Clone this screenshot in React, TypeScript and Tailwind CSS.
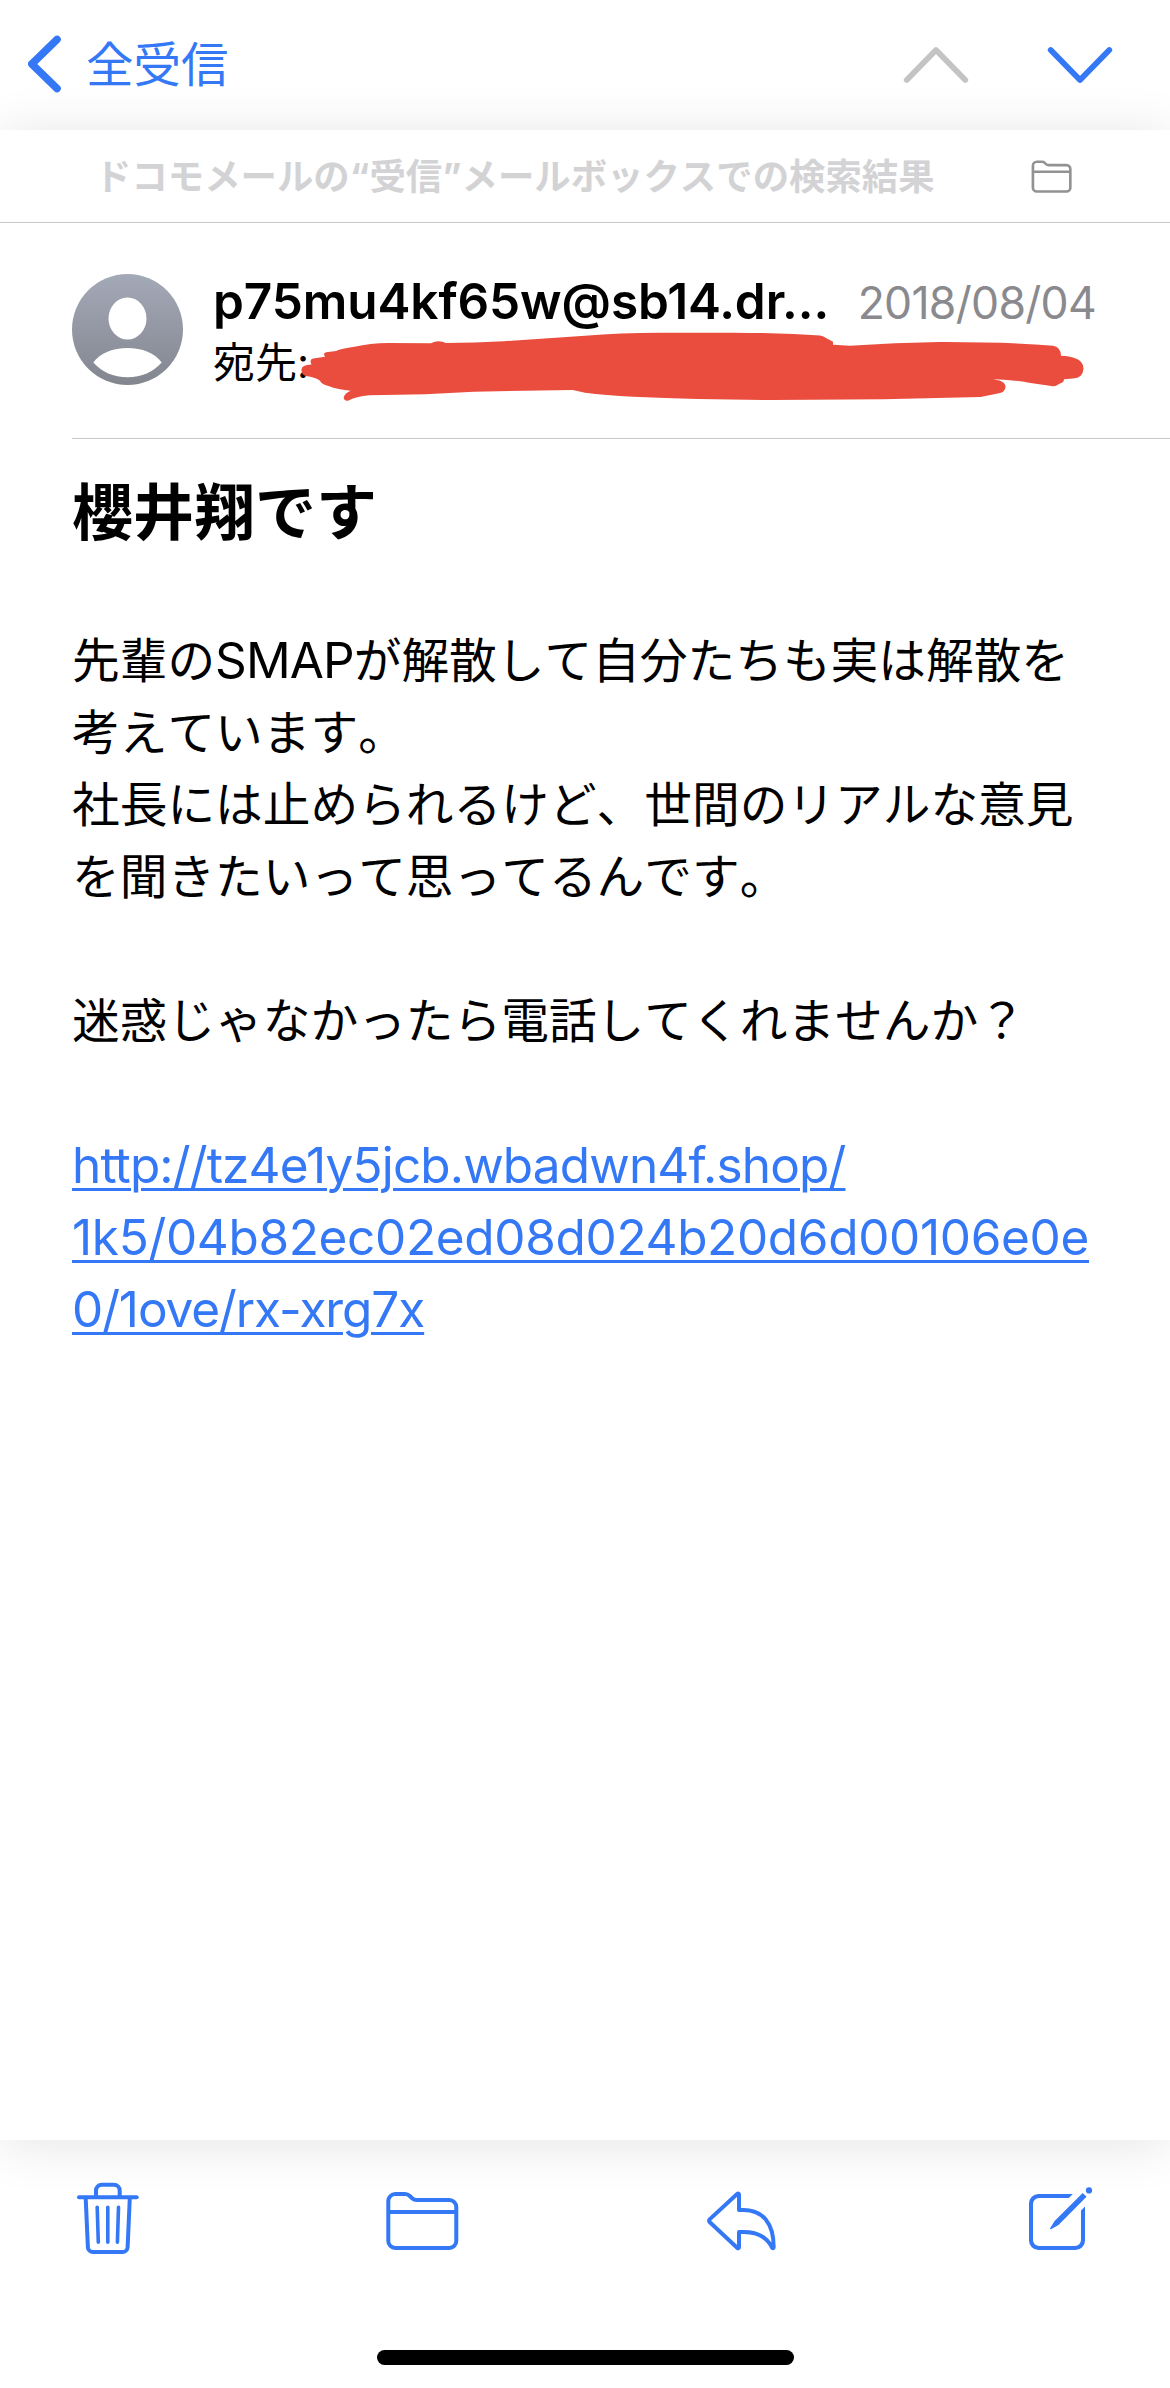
import React from 'react';

const SUBJECT = '櫻井翔です';

const LINK_LINES = [
  { text: 'http://tz4e1y5jcb.wbadwn4f.shop/', tracking: 'tracking-[-0.85px]' },
  { text: '1k5/04b82ec02ed08d024b20d6d00106e0e', tracking: 'tracking-[-0.33px]' },
  { text: '0/1ove/rx-xrg7x', tracking: 'tracking-[-1.1px]' },
];

const BackIcon = () => (
  <svg className="w-[34px] h-[58px]" viewBox="0 0 34 58" fill="none" stroke="currentColor" strokeWidth="7.6" strokeLinecap="round" strokeLinejoin="round">
    <path d="M29 4.500L3.800 29L29 53.500" />
  </svg>
);

const ChevronIcon = ({ className }: { className: string }) => (
  <svg className={className} viewBox="0 0 66 38" fill="none" stroke="currentColor" strokeWidth="5.8" strokeLinecap="round" strokeLinejoin="round">
    <path d="M3.7 34L33 4l29.3 30" />
  </svg>
);

const FolderIcon = ({ className, strokeWidth }: { className: string; strokeWidth: number }) => (
  <svg className={className} viewBox="0 0 80 80" fill="none" stroke="currentColor" strokeWidth={strokeWidth} strokeLinejoin="round">
    <path d="M5.3 23a7 7 0 0 1 7-7h9.5c2.2 0 3.6.6 5 2l2.3 2.2c1.3 1.2 2.8 1.8 4.6 1.8h32.6a7 7 0 0 1 7 7v34a7 7 0 0 1-7 7h-54a7 7 0 0 1-7-7z" />
    <path d="M5.3 34h68" />
  </svg>
);

const TrashIcon = () => (
  <svg className="w-[76px] h-20" viewBox="0 0 76 80" fill="none" stroke="currentColor" strokeWidth="4" strokeLinecap="round" strokeLinejoin="round">
    <path d="M11 19.2h57.7" />
    <path d="M28 19v-6.500a5.800 5.800 0 0 1 5.800-5.800h12.100a5.800 5.800 0 0 1 5.800 5.800V19" />
    <path d="M17.700 20l2.200 49.300a5 5 0 0 0 5 4.700h29.700a5 5 0 0 0 5-4.700L61.800 20" />
    <path strokeWidth="3.600" d="M29.200 29.300l1.100 35M39.800 29.300v35M50.500 29.300l-1.100 35" />
  </svg>
);

const ReplyIcon = () => (
  <svg className="w-20 h-20" viewBox="0 0 80 80" fill="none" stroke="currentColor" strokeWidth="4" strokeLinejoin="round">
    <path d="M37 16.500V32h4.500c19 0 30.200 13 30.200 37.300 0 1-1.200 1.200-1.700.3C64.600 58.300 55 54 41.500 54H37v15.300c0 .9-1 1.300-1.600.7L7.600 44a1.800 1.800 0 0 1 0-2.600L35.400 15.800c.6-.6 1.600-.2 1.600.7z" />
  </svg>
);

const ComposeIcon = () => (
  <svg className="w-20 h-20" viewBox="0 0 80 80" fill="currentColor">
    <path d="M51.800 16l-4 4H18a6 6 0 0 0-6 6v36a6 6 0 0 0 6 6h36a6 6 0 0 0 6-6V32.500l4-4V62.500a9.500 9.500 0 0 1-9.500 9.500h-37A9.500 9.500 0 0 1 8 62.500v-37A9.500 9.500 0 0 1 17.500 16z" />
    <path d="M61.700 15l3.800 3.800-28 28.100L30 51.200c-.7.3-1.200-.2-.9-.9l4.500-7.300z" />
    <circle cx="68" cy="12.400" r="3.100" />
  </svg>
);

const Avatar = () => (
  <svg className="w-[111px] h-[111px] shrink-0" viewBox="0 0 111 111">
    <defs>
      <linearGradient id="avatar" x1="0" y1="0" x2="0" y2="1">
        <stop offset="0" stopColor="#a4a9b8" />
        <stop offset="1" stopColor="#83868f" />
      </linearGradient>
    </defs>
    <circle cx="55.5" cy="55.5" r="55.5" fill="url(#avatar)" />
    <ellipse cx="55.5" cy="44.500" rx="19" ry="21" fill="#fff" />
    <path fill="#fff" d="M21.300 88.500C28 79 41 74 55.500 74S83 79 89.700 88.500C81.500 98 69.500 103.300 55.500 103.300S29.500 98 21.300 88.500z" />
  </svg>
);

// Marker stroke hiding the recipient address
const Redaction = () => (
  <svg className="absolute left-[300px] top-[106px] w-[790px] h-[74px]" viewBox="300 329 790 74" fill="#ea4d3d">
    <path d="M301.500 370Q301 365 311.500 364.500Q309 359.500 313 358.500L325 356.700Q322 352.500 328 352L336 351Q341 348.500 354.500 346.700Q370 343.300 388 343L431 343.200Q438 339.500 446 343Q475 342.800 503.700 341.300L585 335.700Q620 332.800 659.600 332.700H734Q785 333 820 335.500Q824 336 826 338L833 341.700V344.700L850 345.700Q895 342.500 939.500 342Q1005 341.800 1053.300 345.700Q1061 347.500 1061 355.700Q1070 356 1074.500 358Q1083.500 361 1083.500 368.500Q1083 378 1073 378.500L1064 379.300Q1064 382.500 1060 383.500Q1055 387 1051.400 386L1029 382.700Q1010 379.500 990 379Q1005.500 380 1005.500 387Q1005 392.500 999 393.300L980.500 397L883.500 399.300L771.600 400Q700 399.500 633.500 396.700Q605 395.300 585 392.700L572.800 390L474 391.700L425.400 394.300L369.400 395.300Q356 396.500 348 400.700Q343.500 401 343.700 397.300Q345 393 350.700 390.700Q338 389.800 328.400 386Q321 384 320 380.700Q315 377 306 376Q301.500 375 301.500 370z" />
  </svg>
);

const App: React.FC = () => {
  return (
    <div className="w-[1170px] h-[2388px] flex flex-col bg-white text-black overflow-hidden font-['Inter','Noto_Sans_CJK_JP',sans-serif]">
      <header className="h-[130px] shrink-0 flex items-start pt-[35px] pl-[28px] pr-[57px] text-[#3478f6]">
        <BackIcon />
        <span className="ml-[24px] -mt-[4px] text-[47.5px] leading-[68px]">全受信</span>
        <div className="ml-auto mt-[11px] flex gap-[78px]">
          <ChevronIcon className="w-[66px] h-[38px] text-[#c4c4c4]" />
          <ChevronIcon className="w-[66px] h-[38px] rotate-180" />
        </div>
      </header>

      {/* The message sheet casts a soft shadow on both bars */}
      <main className="h-[2010px] shrink-0 bg-white shadow-[0_4px_50px_rgba(0,0,0,0.11)]">
        <div className="h-[93px] flex items-center justify-between pl-[95px] pr-[96px] border-b border-[#c8c8cb]">
          <span className="pt-[2px] text-[36.4px] leading-none font-bold text-[#d3d3d5] whitespace-nowrap [font-kerning:none]">
            ドコモメールの“受信”メールボックスでの検索結果
          </span>
          <FolderIcon className="-mt-[3px] w-11 h-11 text-[#929292]" strokeWidth={4.8} />
        </div>

        <section className="relative h-[215px] flex pt-[51px] pl-[72px] pr-[74px]">
          <Avatar />
          <div className="ml-[30px] -mt-px flex-1 min-w-0">
            <div className="flex items-baseline justify-between whitespace-nowrap leading-[56px]">
              <span className="text-[49.5px] font-semibold tracking-[-0.1px]">p75mu4kf65w@sb14.dr...</span>
              <span className="text-[44.5px] text-[#8a8a8e] tracking-[-0.7px]">2018/08/04</span>
            </div>
            <div className="mt-[3px] text-[42px] leading-[58px]">宛先:</div>
          </div>
          <Redaction />
        </section>

        <article className="ml-[72px] border-t border-[#c8c8cb] [font-kerning:none]">
          <h1 className="mt-[38px] text-[61px] leading-[72px] font-bold">{SUBJECT}</h1>
          <div className="mt-[75px] text-[47.7px] leading-[72px] whitespace-nowrap">
            <p>先輩の<span className="text-[49.5px] tracking-[-0.9px]">SMAP</span>が解散して自分たちも実は解散を</p>
            <p>考えています。</p>
            <p>社長には止められるけど、世間のリアルな意見</p>
            <p>を聞きたいって思ってるんです。</p>
            <p className="mt-[72px]">迷惑じゃなかったら電話してくれませんか？</p>
            <a className="mt-[72px] block text-[49.5px] text-[#3478f6] [font-kerning:normal]">
              {LINK_LINES.map((line) => (
                <span key={line.text} className={`block w-fit underline decoration-[3px] underline-offset-[5px] ${line.tracking}`}>
                  {line.text}
                </span>
              ))}
            </a>
          </div>
        </article>
      </main>

      <footer className="flex-1 flex flex-col text-[#3478f6]">
        <nav className="pt-[38px] pl-[68px] flex gap-[239px]">
          <TrashIcon />
          <FolderIcon className="w-20 h-20" strokeWidth={4} />
          <ReplyIcon />
          <ComposeIcon />
        </nav>
        <div className="mt-[92px] ml-[377px] w-[417px] h-[15px] rounded-full bg-black" />
      </footer>
    </div>
  );
};

export default App;
